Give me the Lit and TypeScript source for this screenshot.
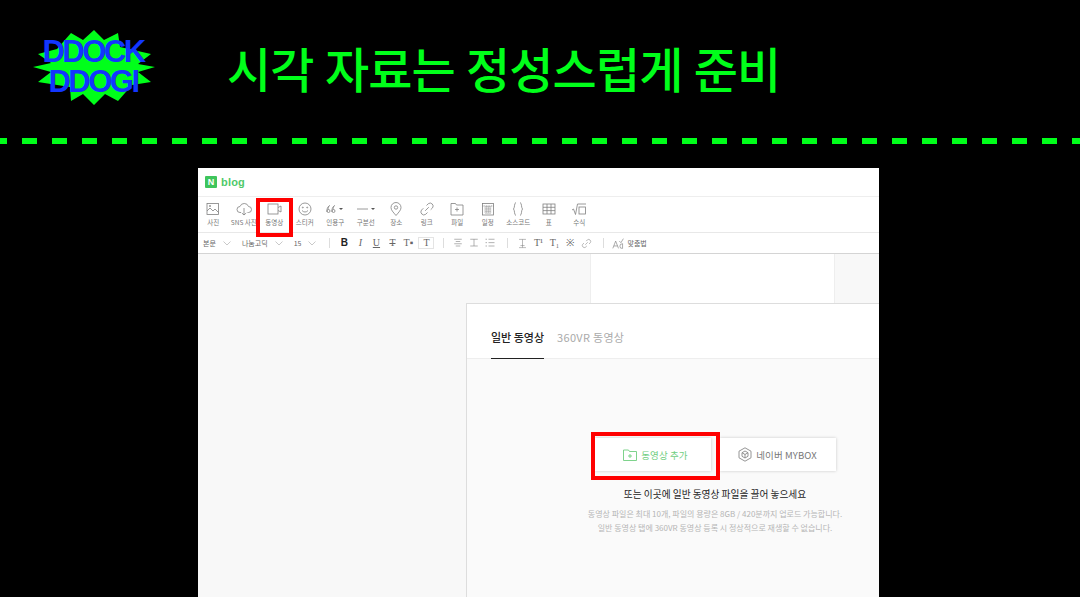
import { LitElement, html, css, svg } from "lit";
import { customElement } from "lit/decorators.js";

const s = (inner: unknown, w = 16, h = 16, vb = "0 0 16 16") =>
  html`<svg width=${w} height=${h} viewBox=${vb} fill="none" stroke="#808080" stroke-width="0.8">${inner}</svg>`;

const link = svg`<path d="M6.200 9.800l3.600-3.600M7.500 4.500l1.800-1.800a3 3 0 0 1 4.200 4.200l-1.800 1.800M8.500 11.500l-1.800 1.800a3 3 0 0 1-4.200-4.200l1.800-1.800"/>`;

const tools: [string, unknown][] = [
  ["사진", s(svg`<rect x="2" y="2.500" width="11.500" height="11"/><path d="M2 10l3-3 3 3 2-2 3.500 3.500M4.500 4.500h1v1h-1z"/>`)],
  ["SNS 사진", s(svg`<path d="M5 11.500H4a3 3 0 0 1 0-6 4.500 4.500 0 0 1 8.500 0 3 3 0 0 1 0 6h-1M8 7v7M5.800 12l2.200 2 2.200-2"/>`)],
  ["동영상", s(svg`<rect x="2" y="3" width="10" height="10"/><path d="M12 6.500l3-1.500v6l-3-1.500"/>`)],
  ["스티커", s(svg`<circle cx="8" cy="8" r="6"/><circle cx="5.800" cy="6.500" r=".5"/><circle cx="10.200" cy="6.500" r=".5"/><path d="M5 9.500c1.500 2 4.500 2 6 0"/>`)],
  ["인용구", s(svg`<path d="M2 11c-.5-2.500.5-5 2.500-6.500C3.500 6 3 7 3.200 8.500M7 11c-.5-2.500.5-5 2.500-6.500C8.500 6 8 7 8.200 8.500"/><circle cx="3.500" cy="10" r="1.500"/><circle cx="8.500" cy="10" r="1.500"/><path d="M14 7h4l-2 2z" fill="#555" stroke="none"/>`, 20, 16, "0 0 20 16")],
  ["구분선", s(svg`<path d="M1 8h11"/><path d="M15 7h4l-2 2z" fill="#555" stroke="none"/>`, 20, 16, "0 0 20 16")],
  ["장소", s(svg`<path d="M8 14.500C5 11 3 9 3 6.500a5 5 0 0 1 10 0C13 9 11 11 8 14.500z"/><circle cx="8" cy="6.500" r="1.700"/>`)],
  ["링크", s(link)],
  ["파일", s(svg`<path d="M2 2.500h4.500l1 1.500H14v10H2zM8 6.500v4M6 8.500h4"/>`)],
  ["일정", s(svg`<rect x="2.500" y="2.500" width="11" height="11.500"/><path d="M2.500 5h11M4.500 7h7M4.500 9h7M4.500 11h7M6 5v8M8 5v8M10 5v8" stroke-dasharray="1 .7"/>`)],
  ["소스코드", s(svg`<path d="M6 1.500c-2 .3-1 5-2.500 6.500C5 9.500 4 14.200 6 14.500M10 1.500c2 .3 1 5 2.500 6.500-1.500 1.500-.5 6.200-2.500 6.500"/>`)],
  ["표", s(svg`<rect x="2" y="3" width="12" height="10"/><path d="M6 3v10M10 3v10M2 6.300h12M2 9.600h12"/>`)],
  ["수식", s(svg`<path d="M1 9l1.500-1 2 5.500L6.500 3H15"/><rect x="8" y="6" width="6.500" height="7"/>`)],
];

const star = [
  [94, 30], [104, 40], [118, 33], [120, 47], [151, 54], [138, 64], [155, 67], [138, 72], [151, 82], [132, 85],
  [118, 101], [105, 94], [94, 105], [83, 94], [71, 101], [70, 87], [38, 82], [51, 72], [33, 67], [51, 63],
  [38, 54], [57, 49], [71, 33], [83, 40],
].map(([x, y]) => `${x - 33},${y - 29}`).join(" ");

const chev = html`<svg class="chev" width="8" height="5" viewBox="0 0 8 5" fill="none" stroke="#bbb" stroke-width=".8"><path d="M.5.500L4 4 7.500.500"/></svg>`;

@customElement("app-root")
export class AppRoot extends LitElement {
  static styles = css`
    :host { display: block; width: 1080px; height: 597px; background: #000; overflow: hidden; position: relative; font-family: "Noto Sans CJK KR", "Noto Sans", sans-serif; }
    .head { height: 138px; display: flex; align-items: flex-start; padding-left: 33px; box-sizing: border-box; }
    .badge { position: relative; width: 122px; height: 76px; margin-top: 29px; flex: none; }
    .badge svg { position: absolute; inset: 0; }
    .badge div { position: absolute; left: -10px; right: -8px; top: 8px; text-align: center; font: bold 31px/30px "Liberation Sans", sans-serif; letter-spacing: -2.500px; color: #1236ff; }
    .title { margin: 30px 0 0 72px; font-size: 48px; line-height: 74px; color: #00ff1a; font-weight: 500; letter-spacing: -.900px; word-spacing: 1.500px; white-space: nowrap; }
    .dash { height: 6px; background: repeating-linear-gradient(90deg, #00ff1a 0 7px, transparent 7px 22px, #00ff1a 22px 30px); }
    .shot { position: relative; margin: 24px 0 0 198px; width: 681px; height: 429px; background: #f8f8f8; overflow: hidden; display: flex; flex-direction: column; }
    .logo { height: 29px; flex: none; background: #fff; border-bottom: 1px solid #eee; box-sizing: border-box; display: flex; align-items: center; gap: 4px; padding-left: 7px; }
    .n { width: 12px; height: 12px; background: #3fc55c; border-radius: 1px; color: #fff; font: bold 9px/12px "Liberation Sans", sans-serif; text-align: center; }
    .blog { color: #4fc96a; font: bold 11px/12px "Liberation Sans", sans-serif; letter-spacing: .2px; }
    .tools { height: 36px; flex: none; background: #fff; border-bottom: 1px solid #e8e8e8; box-sizing: border-box; display: flex; }
    .tool { width: 30.500px; display: flex; flex-direction: column; align-items: center; padding-top: 4px; box-sizing: border-box; }
    .tool svg { height: 16px; flex: none; }
    .tool span { font-size: 6.500px; line-height: 10px; color: #777; margin-top: 0; white-space: nowrap; }
    .fmt { height: 21px; flex: none; background: #fff; border-bottom: 1px solid #d4d4d4; box-sizing: border-box; display: flex; align-items: center; padding-left: 5px; font-size: 7px; color: #666; }
    .fmt .chev { margin: 0 0 0 7px; }
    .lab2 { margin-left: 11px; }
    .lab3 { margin-left: 11px; }
    .sep { width: 1px; height: 10px; background: #ddd; margin: 0 6px 0 13px; flex: none; }
    .sep.b { margin: 0 6px 0 9px; }
    .ic { width: 16px; text-align: center; font: 10px/12px "Liberation Serif", serif; color: #666; flex: none; }
    .ic.bold { font: bold 10px/12px "Liberation Sans", sans-serif; color: #222; }
    .ic.it { font-style: italic; }
    .ic.ul { text-decoration: underline; }
    .ic.st { text-decoration: line-through; }
    .ic.box { outline: 1px solid #e4e4e4; outline-offset: -1px; margin-left: 2px; }
    .ic svg { display: block; margin: auto; }
    .spell { margin-left: 2px; display: flex; align-items: center; gap: 2px; }
    .paper { flex: none; margin-left: 392px; width: 245px; height: 50px; background: #fff; border: solid #eee; border-width: 0 1px; box-sizing: border-box; }
    .dlg { position: absolute; left: 268px; top: 135px; width: 498px; height: 300px; background: #fafafa; border: 1px solid #ddd; box-sizing: border-box; }
    .tabs { height: 55px; background: #fff; border-bottom: 1px solid #eee; box-sizing: border-box; display: flex; gap: 13px; padding-left: 24px; }
    .tab { font-size: 11px; line-height: 15px; padding-top: 26px; height: 55px; box-sizing: border-box; color: #aaa; letter-spacing: .3px; }
    .tab.on { color: #222; font-weight: 500; border-bottom: 1px solid #222; letter-spacing: 0; }
    .up { display: flex; flex-direction: column; align-items: center; padding-top: 79px; }
    .btns { display: flex; gap: 9px; }
    .btn { width: 116px; height: 33px; background: #fff; box-shadow: 0 0 3px rgba(0,0,0,.2); display: flex; align-items: center; justify-content: center; gap: 4px; font-size: 9.500px; color: #777; letter-spacing: .1px; }
    .btn.g { color: #6fce7f; padding-left: 6px; box-sizing: border-box; }
    .hint { font-size: 9.700px; line-height: 14px; color: #222; margin-top: 16px; }
    .small { font-size: 8px; line-height: 14px; color: #b5b5b5; text-align: center; margin-top: 6px; white-space: nowrap; }
    .red { position: absolute; border: 4px solid #f00; box-sizing: border-box; }
    .r1 { left: 58px; top: 30px; width: 37px; height: 39px; }
    .r2 { left: 393px; top: 264px; width: 129px; height: 48px; }
  `;

  render() {
    return html`
      <div class="head">
        <div class="badge">
          <svg width="122" height="76" viewBox="0 0 122 76"><polygon points=${star} fill="#00ff1a"/></svg>
          <div>DDOCK<br />DDOGI</div>
        </div>
        <div class="title">시각 자료는 정성스럽게 준비</div>
      </div>
      <div class="dash"></div>
      <div class="shot">
        <div class="logo"><div class="n">N</div><div class="blog">blog</div></div>
        <div class="tools">
          ${tools.map(([l, i]) => html`<div class="tool">${i}<span>${l}</span></div>`)}
        </div>
        <div class="fmt">
          <span>본문</span>${chev}<span class="lab2">나눔고딕</span>${chev}<span class="lab3">15</span>${chev}
          <div class="sep"></div>
          <div class="ic bold">B</div><div class="ic it">I</div><div class="ic ul">U</div><div class="ic st">T</div><div class="ic">T▪</div><div class="ic box">T</div>
          <div class="sep b"></div>
          ${["M3 3h10M5 6h6M3 9h10M5 12h6", "M3 3h10M8 3v9M3 12h10", "M6 3h8M6 7.500h8M6 12h8M2 3h2M2 7.500h2M2 12h2"].map((d) => html`<div class="ic">${s(svg`<path d=${d}/>`, 12, 12)}</div>`)}
          <div class="sep b"></div>
          <div class="ic">${s(svg`<path d="M3 2h10M3 14h10M8 2v12M5 11h6"/>`, 11, 11)}</div><div class="ic">T¹</div><div class="ic">T₁</div><div class="ic">※</div>
          <div class="ic">${s(link, 11, 11)}</div>
          <div class="sep b"></div>
          <div class="spell">${s(svg`<path d="M1 14L4.500 5 8 14M2.300 11h4.500M13 8.500a2.800 2.800 0 1 0 0 5.500V8M9 5l2 2 3-5"/>`, 13, 13)}<span>맞춤법</span></div>
        </div>
        <div class="paper"></div>
        <div class="dlg">
          <div class="tabs"><div class="tab on">일반 동영상</div><div class="tab">360VR 동영상</div></div>
          <div class="up">
            <div class="btns">
              <div class="btn g">
                <svg width="14" height="12" viewBox="0 0 14 12" fill="none" stroke="#6fce7f" stroke-width=".9"><path d="M.5 1h5l1 1.500h7v9H.5zM7 5v4M5 7h4"/></svg>
                동영상 추가
              </div>
              <div class="btn">
                <svg width="14" height="15" viewBox="0 0 14 15" fill="none" stroke="#888" stroke-width=".9"><path d="M7 .8l6 3.400v6.600l-6 3.400-6-3.400V4.200z"/><path d="M7 4l3 1.700v3.600L7 11 4 9.300V5.700zM4 5.700l3 1.800 3-1.800M7 7.500V11"/></svg>
                네이버 MYBOX
              </div>
            </div>
            <div class="hint">또는 이곳에 일반 동영상 파일을 끌어 놓으세요</div>
            <div class="small">동영상 파일은 최대 10개, 파일의 용량은 8GB / 420분까지 업로드 가능합니다.<br />일반 동영상 탭에 360VR 동영상 등록 시 정상적으로 재생할 수 없습니다.</div>
          </div>
        </div>
        <div class="red r1"></div>
        <div class="red r2"></div>
      </div>
    `;
  }
}
